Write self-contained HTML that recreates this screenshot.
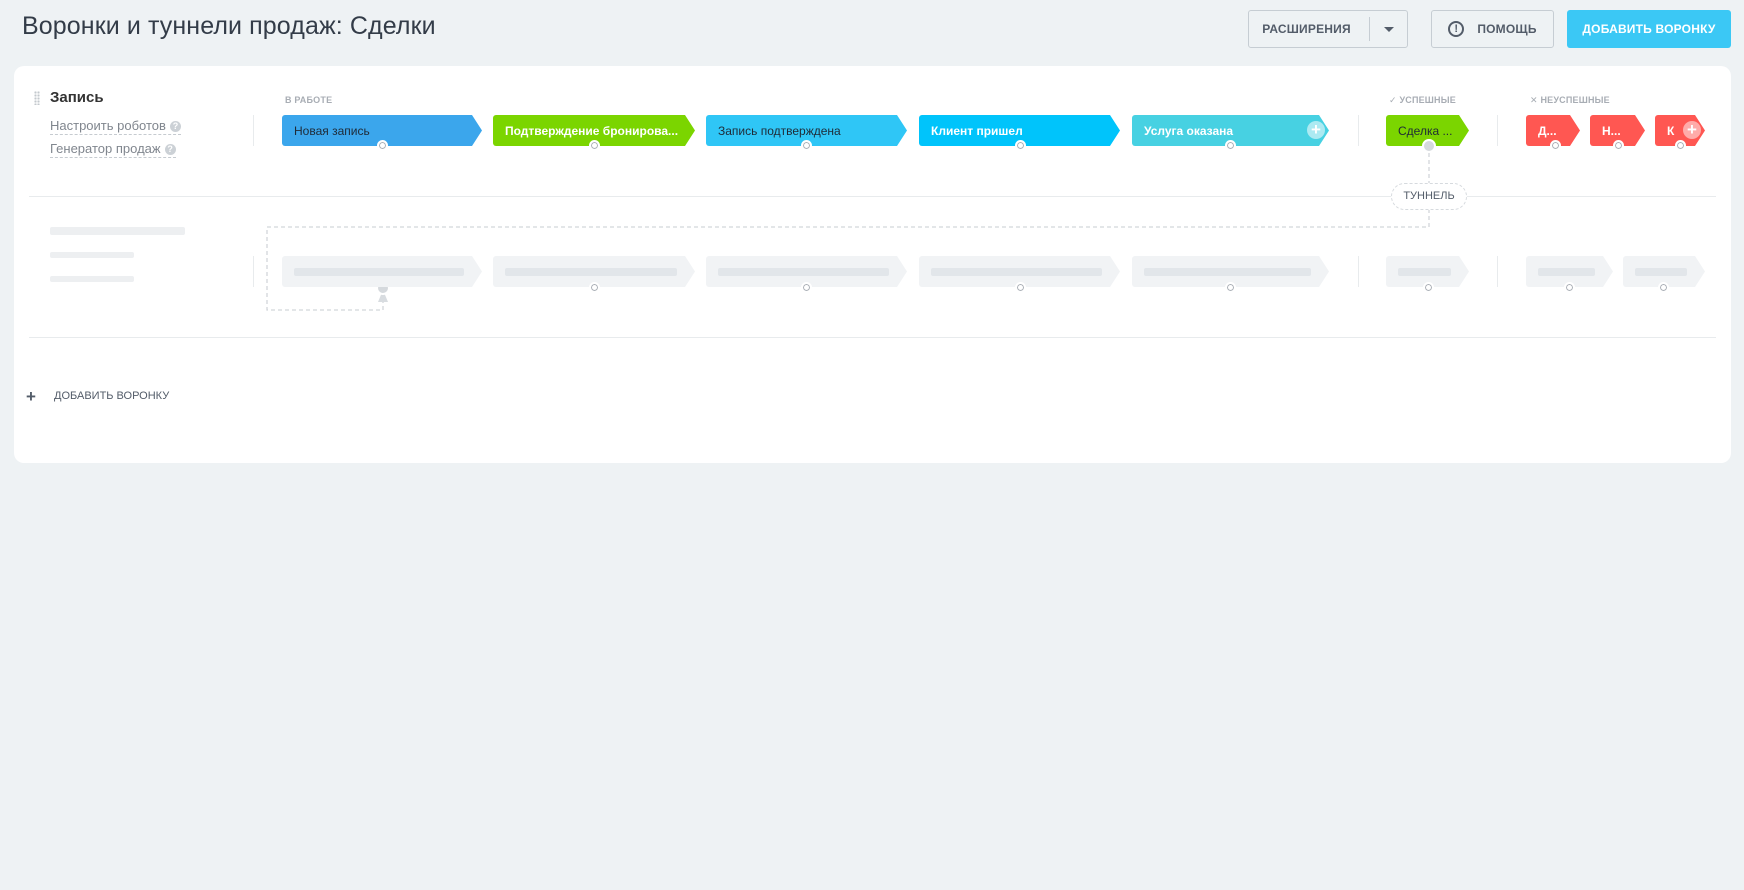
<!DOCTYPE html>
<html><head><meta charset="utf-8"><style>
*{box-sizing:border-box;margin:0;padding:0}
body{width:1744px;height:890px;background:#eef2f4;font-family:"Liberation Sans","DejaVu Sans",sans-serif;position:relative;overflow:hidden;color:#313942}
.a{position:absolute}
.title{left:22px;top:12px;font-size:25px;color:#333c48;font-weight:300;letter-spacing:.1px}
.btn{top:10px;height:38px;border-radius:3px;font-size:12px;font-weight:bold;display:flex;align-items:center;justify-content:center;letter-spacing:.2px}
.b1{left:1248px;width:160px;border:1px solid #c6cdd3;color:#535c69;background:#eef2f4}
.b2{left:1431px;width:123px;border:1px solid #c6cdd3;color:#535c69;background:#eef2f4}
.b3{left:1567px;width:164px;background:#3bc8f5;color:#fff}
.card{left:14px;top:66px;width:1717px;height:397px;background:#fff;border-radius:10px}
.st{height:31px;display:flex;align-items:center;padding-left:12px;font-size:12px;font-weight:bold;white-space:nowrap;overflow:hidden;clip-path:polygon(0 0,calc(100% - 10px) 0,100% 50%,calc(100% - 10px) 100%,0 100%);border-radius:3px 0 0 3px}
.dot{width:11px;height:11px;border-radius:50%;background:#fff;border:2px solid #fff;box-shadow:inset 0 0 0 1px #a8adb4}
.sk{height:31px;background:#f1f3f5;clip-path:polygon(0 0,calc(100% - 10px) 0,100% 50%,calc(100% - 10px) 100%,0 100%);border-radius:3px 0 0 3px}
.skb{position:absolute;left:12px;right:18px;top:12px;height:8px;background:#e2e6ea;border-radius:2px}
.bar{background:#edeff1;height:8px;border-radius:2px}
.vs{width:1px;background:#e8ebed}
.lbl{font-size:9px;color:#a8adb4;font-weight:bold;letter-spacing:.2px}
.hl{height:1px;background:#e8ebed;left:29px;width:1687px}
.lnk{font-size:13px;color:#80868e;border-bottom:1px dashed #c6cbd0;line-height:17px}
.q{display:inline-block;width:11px;height:11px;border-radius:50%;background:#ccd1d6;color:#fff;font-size:9px;text-align:center;line-height:11px;margin-left:4px;vertical-align:1px;font-weight:bold}
.plus{width:18px;height:18px;border-radius:50%;background:rgba(255,255,255,.55);color:#fff;font-size:17px;line-height:17px;text-align:center;font-weight:bold}
</style></head><body>
<div class="a title">Воронки и туннели продаж: Сделки</div>
<div class="a btn b1"><span style="margin-right:18px">РАСШИРЕНИЯ</span><span style="width:1px;height:24px;background:#c6cdd3;margin-right:14px"></span><span style="border:5px solid transparent;border-top:5px solid #535c69;border-bottom:0;width:0;height:0"></span></div>
<div class="a btn b2"><span style="width:16px;height:16px;border:2px solid #535c69;border-radius:50%;font-size:11px;line-height:12px;text-align:center;margin-right:13px">!</span>ПОМОЩЬ</div>
<div class="a btn b3">ДОБАВИТЬ ВОРОНКУ</div>
<div class="a card"></div>

<div class="a" style="left:34px;top:91px;width:6px;height:14px;background:radial-gradient(circle,#c3c8cd 1px,transparent 1.3px) 0 0/3px 3px"></div>
<div class="a" style="left:50px;top:89px;font-size:15px;font-weight:bold;color:#333">Запись</div>
<div class="a lnk" style="left:50px;top:117px">Настроить роботов<span class="q">?</span></div>
<div class="a lnk" style="left:50px;top:140px">Генератор продаж<span class="q">?</span></div>
<div class="a vs" style="left:253px;top:115px;height:31px"></div>

<div class="a lbl" style="left:285px;top:95px">В РАБОТЕ</div>
<div class="a lbl" style="left:1389px;top:95px">✓ УСПЕШНЫЕ</div>
<div class="a lbl" style="left:1530px;top:95px">✕ НЕУСПЕШНЫЕ</div>

<div class="a st" style="left:282px;top:115px;width:200px;background:#3ba6ec;color:#1f2a36;font-weight:normal">Новая запись</div>
<div class="a st" style="left:493px;top:115px;width:202px;background:#7bd500;color:#fff">Подтверждение бронирова...</div>
<div class="a st" style="left:706px;top:115px;width:201px;background:#2fc6f6;color:#1f2a36;font-weight:normal">Запись подтверждена</div>
<div class="a st" style="left:919px;top:115px;width:201px;background:#00c4fb;color:#fff">Клиент пришел</div>
<div class="a st" style="left:1132px;top:115px;width:197px;background:#47d1e2;color:#fff">Услуга оказана</div>
<div class="a plus" style="left:1307px;top:121px">+</div>
<div class="a vs" style="left:1358px;top:115px;height:31px"></div>
<div class="a st" style="left:1386px;top:115px;width:83px;background:#7bd500;color:#1f2a36;font-weight:normal">Сделка ...</div>
<div class="a vs" style="left:1497px;top:115px;height:31px"></div>
<div class="a st" style="left:1526px;top:115px;width:54px;background:#ff5752;color:#fff">Д...</div>
<div class="a st" style="left:1590px;top:115px;width:55px;background:#ff5752;color:#fff">Н...</div>
<div class="a st" style="left:1655px;top:115px;width:50px;background:#ff5752;color:#fff">К</div>
<div class="a plus" style="left:1683px;top:121px;background:rgba(255,255,255,.5)">+</div>

<div class="a dot" style="left:377px;top:140px"></div>
<div class="a dot" style="left:589px;top:140px"></div>
<div class="a dot" style="left:801px;top:140px"></div>
<div class="a dot" style="left:1015px;top:140px"></div>
<div class="a dot" style="left:1225px;top:140px"></div>
<div class="a dot" style="left:1550px;top:140px"></div>
<div class="a dot" style="left:1613px;top:140px"></div>
<div class="a dot" style="left:1675px;top:140px"></div>

<div class="a hl" style="top:196px"></div>
<svg class="a" style="left:0;top:0" width="1744" height="400">
<path d="M1429 146 V227 H267 V310 H383 V296" fill="none" stroke="#d2d6da" stroke-width="1.3" stroke-dasharray="4 3"/>
<path d="M383 290 L378 302 L388 302 Z" fill="#d8dce0"/>
<circle cx="1429" cy="146" r="6" fill="#d5d9dd" stroke="#fff" stroke-width="2"/>
<circle cx="383" cy="288" r="6" fill="#d5d9dd" stroke="#fff" stroke-width="2"/>
</svg>
<div class="a" style="left:1391px;top:183px;width:76px;height:27px;border:1px dashed #d6dade;border-radius:14px;background:#fff;font-size:11px;color:#535c69;text-align:center;line-height:25px">ТУННЕЛЬ</div>

<div class="a bar" style="left:50px;top:227px;width:135px"></div>
<div class="a bar" style="left:50px;top:252px;width:84px;height:6px"></div>
<div class="a bar" style="left:50px;top:276px;width:84px;height:6px"></div>
<div class="a vs" style="left:253px;top:256px;height:31px"></div>
<div class="a sk" style="left:282px;top:256px;width:200px"><div class="skb"></div></div>
<div class="a sk" style="left:493px;top:256px;width:202px"><div class="skb"></div></div>
<div class="a sk" style="left:706px;top:256px;width:201px"><div class="skb"></div></div>
<div class="a sk" style="left:919px;top:256px;width:201px"><div class="skb"></div></div>
<div class="a sk" style="left:1132px;top:256px;width:197px"><div class="skb"></div></div>
<div class="a vs" style="left:1358px;top:256px;height:31px"></div>
<div class="a sk" style="left:1386px;top:256px;width:83px"><div class="skb"></div></div>
<div class="a vs" style="left:1497px;top:256px;height:31px"></div>
<div class="a sk" style="left:1526px;top:256px;width:87px"><div class="skb"></div></div>
<div class="a sk" style="left:1623px;top:256px;width:82px"><div class="skb"></div></div>
<div class="a dot" style="left:589px;top:282px"></div>
<div class="a dot" style="left:801px;top:282px"></div>
<div class="a dot" style="left:1015px;top:282px"></div>
<div class="a dot" style="left:1225px;top:282px"></div>
<div class="a dot" style="left:1423px;top:282px"></div>
<div class="a dot" style="left:1564px;top:282px"></div>
<div class="a dot" style="left:1658px;top:282px"></div>

<div class="a hl" style="top:337px"></div>
<div class="a" style="left:26px;top:387px;font-size:17px;font-weight:bold;color:#535c69">+</div>
<div class="a" style="left:54px;top:390px;font-size:11px;color:#535c69">ДОБАВИТЬ ВОРОНКУ</div>
</body></html>
